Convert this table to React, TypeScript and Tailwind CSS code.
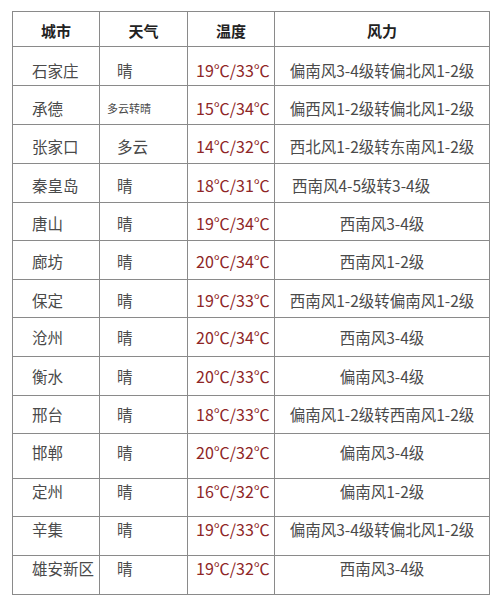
const rows = [
  { city: "石家庄", weather: "晴", temp: "19℃/33℃", wind: "偏南风3-4级转偏北风1-2级", h: "h-[39px]", pt: "pt-[13px]" },
  { city: "承德", weather: "多云转晴", temp: "15℃/34℃", wind: "偏西风1-2级转偏北风1-2级", h: "h-[39px]", pt: "pt-[12px]" },
  { city: "张家口", weather: "多云", temp: "14℃/32℃", wind: "西北风1-2级转东南风1-2级", h: "h-[39px]", pt: "pt-[11px]" },
  { city: "秦皇岛", weather: "晴", temp: "18℃/31℃", wind: "西南风4-5级转3-4级", h: "h-[39px]", pt: "pt-[11px]", left: true },
  { city: "唐山", weather: "晴", temp: "19℃/34℃", wind: "西南风3-4级", h: "h-[38px]", pt: "pt-[10px]" },
  { city: "廊坊", weather: "晴", temp: "20℃/34℃", wind: "西南风1-2级", h: "h-[39px]", pt: "pt-[10px]" },
  { city: "保定", weather: "晴", temp: "19℃/33℃", wind: "西南风1-2级转偏南风1-2级", h: "h-[38px]", pt: "pt-[10px]" },
  { city: "沧州", weather: "晴", temp: "20℃/34℃", wind: "西南风3-4级", h: "h-[39px]", pt: "pt-[9px]" },
  { city: "衡水", weather: "晴", temp: "20℃/33℃", wind: "偏南风3-4级", h: "h-[39px]", pt: "pt-[9px]" },
  { city: "邢台", weather: "晴", temp: "18℃/33℃", wind: "偏南风1-2级转西南风1-2级", h: "h-[38px]", pt: "pt-[8px]" },
  { city: "邯郸", weather: "晴", temp: "20℃/32℃", wind: "偏南风3-4级", h: "h-[45px]", pt: "pt-[8px]" },
  { city: "定州", weather: "晴", temp: "16℃/32℃", wind: "偏南风1-2级", h: "h-[38px]", pt: "pt-[2px]" },
  { city: "辛集", weather: "晴", temp: "19℃/33℃", wind: "偏南风3-4级转偏北风1-2级", h: "h-[39px]", pt: "pt-[2px]" },
  { city: "雄安新区", weather: "晴", temp: "19℃/32℃", wind: "西南风3-4级", h: "h-[39px]", pt: "pt-[2px]" },
]

const cell = "border-r border-b border-[#8a8a8a]"

function App() {
  return (
    <div className="w-[500px] h-[611px] bg-white pt-[11px] pl-[12px] font-['Noto_Sans_CJK_SC',sans-serif]">
      <div className="w-[478px] border-l border-t border-[#8a8a8a]">
        <div className="grid grid-cols-[87px_88px_87px_215px] h-[35px] text-[15px] leading-[20px] font-bold text-[#222]">
          <div className={`${cell} text-center pt-[9px]`}>城市</div>
          <div className={`${cell} text-center pt-[9px]`}>天气</div>
          <div className={`${cell} text-center pt-[9px]`}>温度</div>
          <div className={`${cell} text-center pt-[9px]`}>风力</div>
        </div>

        {rows.map((r) => (
          <div key={r.city} className={`grid grid-cols-[87px_88px_87px_215px] ${r.h} text-[15.5px] leading-[20px] text-[#4a4a4a]`}>
            <div className={`${cell} ${r.pt} pl-[19px] whitespace-nowrap`}>{r.city}</div>
            <div className={`${cell} ${r.pt} whitespace-nowrap ${r.weather.length > 2 ? "pl-[7px] text-[11px]" : "pl-[17px]"}`}>
              {r.weather}
            </div>
            <div className={`${cell} ${r.pt} pl-[8px] text-[16px] text-[#8e2626] whitespace-nowrap`}>{r.temp}</div>
            <div className={`${cell} ${r.pt} whitespace-nowrap ${r.left ? "pl-[17px]" : "text-center"}`}>{r.wind}</div>
          </div>
        ))}
      </div>
    </div>
  )
}

export default App
